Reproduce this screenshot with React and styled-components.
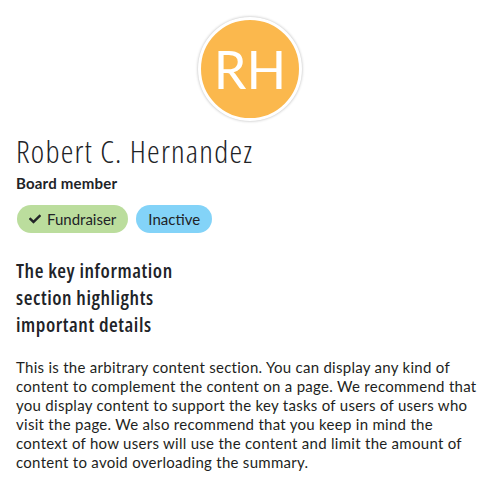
import React from "react";
import styled, { createGlobalStyle } from "styled-components";
import { FaCheck } from "react-icons/fa";

const Global = createGlobalStyle`
  html, body { margin: 0; padding: 0; background: #fff; }
  body { font-family: Lato, "Open Sans", sans-serif; color: #212327; }
`;

const Page = styled.div`
  width: 500px;
  box-sizing: border-box;
  padding: 17px 16px 0 16px;
  display: flex;
  flex-direction: column;
`;

const AvatarRow = styled.div`
  display: flex;
  justify-content: center;
`;

const Avatar = styled.div`
  width: 98px;
  height: 98px;
  border-radius: 50%;
  background: #fbb84d;
  border: 3px solid #fff;
  box-shadow: 0 0 3px rgba(0, 0, 0, 0.3);
  display: flex;
  align-items: center;
  justify-content: center;
  color: #fff;
  font-family: Lato, sans-serif;
  font-size: 52px;
  font-weight: 400;
`;

const Name = styled.h1`
  margin: 11px 0 0 0;
  font-family: "Open Sans", sans-serif;
  font-stretch: 75%;
  font-weight: 300;
  font-size: 32px;
  line-height: 38px;
  letter-spacing: 1.2px;
  color: #212327;
`;

const Role = styled.div`
  margin-top: 3px;
  font-family: Lato, sans-serif;
  font-weight: 700;
  font-size: 15px;
  line-height: 20px;
  letter-spacing: 0.2px;
`;

const Badges = styled.div`
  display: flex;
  gap: 8px;
  margin: 12px 0 0 1px;
`;

const Badge = styled.span`
  display: inline-flex;
  align-items: center;
  gap: 6px;
  height: 28px;
  padding: 0 12px;
  border-radius: 14px;
  background: ${(p) => p.$bg};
  font-family: Lato, sans-serif;
  font-size: 15px;
  color: #212327;
`;

const Heading = styled.h2`
  margin: 24px 0 0 0;
  width: 190px;
  font-family: "Open Sans", sans-serif;
  font-stretch: 75%;
  font-weight: 600;
  font-size: 20px;
  line-height: 27px;
  letter-spacing: 0.55px;
  color: #212327;
`;

const Body = styled.p`
  margin: 20px 0 0 0;
  font-family: Lato, sans-serif;
  font-size: 15px;
  line-height: 19px;
  letter-spacing: 0.28px;
  color: #1e1f22;
`;

export default function App() {
  return (
    <>
      <Global />
      <Page>
        <AvatarRow>
          <Avatar>RH</Avatar>
        </AvatarRow>
        <Name>Robert C. Hernandez</Name>
        <Role>Board member</Role>
        <Badges>
          <Badge $bg="#bbdd9d">
            <FaCheck size={12} />
            Fundraiser
          </Badge>
          <Badge $bg="#83d3f8">Inactive</Badge>
        </Badges>
        <Heading>The key information section highlights important details</Heading>
        <Body>
          This is the arbitrary content section. You can display any kind of
          content to complement the content on a page. We recommend that you
          display content to support the key tasks of users of users who visit
          the page. We also recommend that you keep in mind the context of how
          users will use the content and limit the amount of content to avoid
          overloading the summary.
        </Body>
      </Page>
    </>
  );
}
